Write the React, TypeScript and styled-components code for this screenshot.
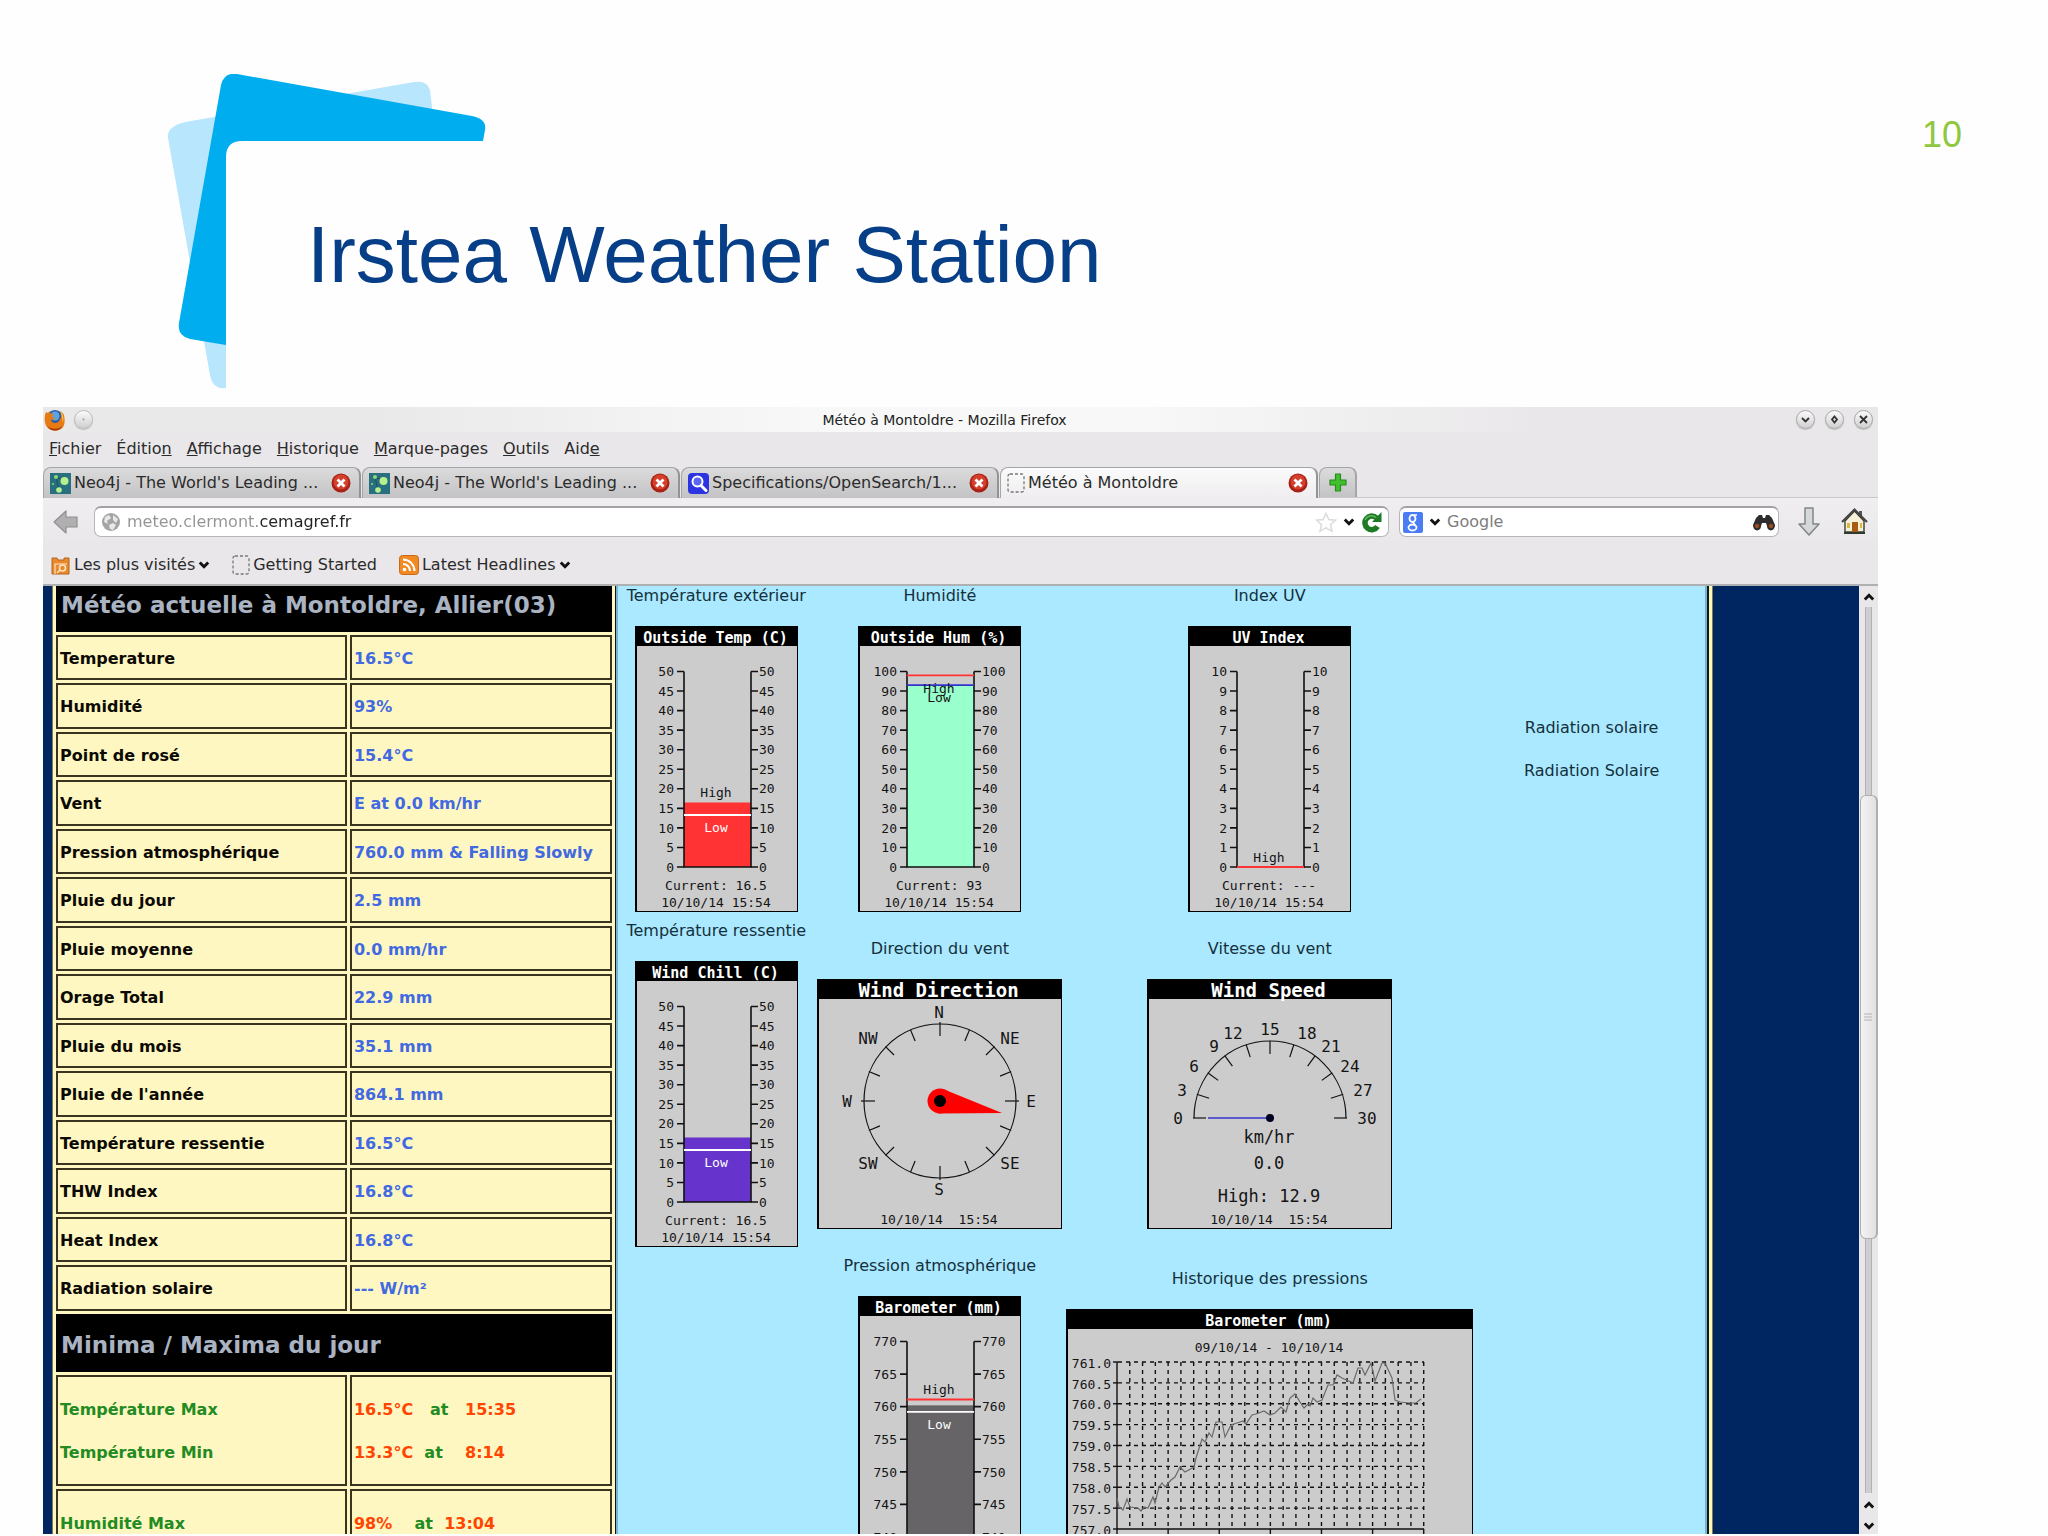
import React from "react";
import styled, { createGlobalStyle } from "styled-components";

const sans = `"DejaVu Sans", "Noto Sans", sans-serif`;
const mono = `"DejaVu Sans Mono", "Liberation Mono", monospace`;

const GlobalStyle = createGlobalStyle`
  * { box-sizing: border-box; }
  body { margin: 0; background: #fefefe; }
  button { font: inherit; color: inherit; background: none; border: 0; padding: 0; }
  svg { display: block; flex: none; }
`;

/* ---------- slide ---------- */

const Slide = styled.main`
  display: flex;
  flex-direction: column;
  height: 100vh;
  overflow: hidden;
  padding-bottom: 2px;
`;

const SlideHeader = styled.header`
  display: grid;
  grid-template-columns: 1fr auto;
  align-items: start;
  min-height: 407px;
  padding: 74px 86px 0 166px;
  font-family: "Liberation Sans", Arial, sans-serif;
`;

const Logo = styled.svg`
  grid-area: 1 / 1;
`;

const SlideTitle = styled.h1`
  grid-area: 1 / 1;
  margin: 135px 0 0 141px;
  font-size: 80px;
  line-height: 92px;
  font-weight: 400;
  color: #063e87;
`;

const SlideNumber = styled.span`
  margin-top: 41px;
  font-size: 36px;
  line-height: 40px;
  color: #8fc73e;
`;

/* ---------- browser window ---------- */

const Browser = styled.section`
  display: flex;
  flex-direction: column;
  flex: 1;
  min-height: 0;
  margin: 0 170px 0 43px;
  background: #e9e7e9;
  font-family: ${sans};
  font-size: 16px;
  line-height: 20px;
  color: #2b2b2b;
`;

const TitleBar = styled.div`
  display: flex;
  align-items: center;
  height: 25px;
  padding: 0 5px 0 1px;
  background: linear-gradient(90deg, #e9e9ea 18%, #f8f8f8 42%, #f8f8f8 60%, #e9e7e9 82%);
`;

const WindowTitle = styled.h2`
  flex: 1;
  margin: 0;
  text-align: center;
  font-size: 14px;
  font-weight: 400;
  color: #222;
`;

const ButtonGroup = styled.div<{ $gap: number }>`
  display: flex;
  align-items: center;
  gap: ${(p) => p.$gap}px;
`;

const RoundButton = styled.button<{ $faint?: boolean }>`
  display: grid;
  place-items: center;
  width: 19px;
  height: 19px;
  border-radius: 50%;
  border: 1px solid ${(p) => (p.$faint ? "#bcbcbc" : "#a9a9a9")};
  background: linear-gradient(#fbfbfb, #cfcfcf);
  box-shadow: 0 1px 1px #bbb;
`;

const MenuBar = styled.nav`
  display: flex;
  align-items: center;
  gap: 15px;
  height: 35px;
  padding: 0 6px 1px;
`;

const TabStrip = styled.div`
  display: flex;
  gap: 1px;
  height: 31px;
  border-bottom: 1px solid #c9c7c9;
`;

const Tab = styled.div<{ $active?: boolean }>`
  display: flex;
  align-items: center;
  gap: 3px;
  width: 318px;
  height: 31px;
  padding: 0 8px 0 6px;
  border: 1px solid #a5a4a6;
  border-right: 2px solid #939295;
  border-bottom: 0;
  border-radius: 8px 8px 0 0;
  background: ${(p) =>
    p.$active ? "linear-gradient(#fbfbfb, #efedef)" : "linear-gradient(#dcdbdc, #c3c2c4)"};
`;

const TabLabel = styled.button`
  flex: 1;
  min-width: 0;
  text-align: left;
  white-space: nowrap;
`;

const NewTab = styled.button`
  display: grid;
  place-items: center;
  width: 38px;
  height: 30px;
  border: 1px solid #a5a4a6;
  border-right-width: 2px;
  border-bottom: 0;
  border-radius: 8px 8px 0 0;
  background: linear-gradient(#dddcdd, #c3c2c4);
`;

const NavRow = styled.div`
  display: flex;
  align-items: center;
  height: 47px;
  padding: 0 10px;
  background: linear-gradient(#f0eef0, #e9e7e9);
`;

const Field = styled.label<{ $wide?: boolean }>`
  display: flex;
  align-items: center;
  flex: ${(p) => (p.$wide ? "1 1 0" : "0 0 380px")};
  height: 31px;
  padding: 0 ${(p) => (p.$wide ? 6 : 3)}px;
  margin-left: ${(p) => (p.$wide ? 14 : 10)}px;
  gap: 6px;
  background: #fff;
  border: 1px solid #b7b5b7;
  border-top: 2px solid #a3a1a3;
  border-radius: 7px;
`;

const TextInput = styled.input`
  flex: 1;
  min-width: 0;
  border: 0;
  outline: 0;
  padding: 0;
  background: none;
  font: inherit;
  color: #222;
  &::placeholder {
    color: #7d7d7d;
    opacity: 1;
  }
`;

const AddressInput = styled(TextInput)`
  background: linear-gradient(90deg, #939393 132px, #222 132px);
  -webkit-background-clip: text;
  background-clip: text;
  -webkit-text-fill-color: transparent;
`;

const ToolIcons = styled.div`
  display: flex;
  align-items: center;
  gap: 20px;
  margin-left: 18px;
`;

const Bookmarks = styled.div`
  display: flex;
  align-items: center;
  gap: 22px;
  height: 41px;
  padding: 0 8px;
  border-bottom: 2px solid #aeb0b2;
`;

const Bookmark = styled.button`
  display: flex;
  align-items: center;
  gap: 3px;
`;

/* ---------- page shown in the browser ---------- */

const Viewport = styled.div`
  display: flex;
  flex: 1;
  min-height: 0;
  overflow: hidden;
  background: #002661;
`;

const Scrolled = styled.div`
  display: flex;
  flex: 1;
  align-self: flex-start;
  margin: -15px 147px 0 10px;
  background: #fff7c2;
  border-right: 3px solid #fdf8b4;
  outline: 1px solid #7d7a58;
`;

const Readings = styled.table`
  flex: none;
  width: 562px;
  align-self: flex-start;
  table-layout: fixed;
  border-collapse: separate;
  border-spacing: 3px;
  font-weight: 700;
  text-align: left;
`;

const SectionTitle = styled.th`
  height: 58px;
  padding: 3px 5px 0;
  background: #000;
  color: #a9b3c2;
  font-size: 23px;
  line-height: 28px;
`;

const Row = styled.tr`
  height: 45px;
  &:nth-child(even) {
    height: 46px;
  }
  th,
  td {
    padding-top: 2px;
  }
`;

const Label = styled.th<{ $tone?: string }>`
  padding: 0 2px;
  border: 2px solid #39341f;
  color: ${(p) => p.$tone ?? "#0c0a04"};
`;

const Value = styled.td<{ $tone?: string }>`
  padding: 0 2px;
  border: 2px solid #39341f;
  color: ${(p) => p.$tone ?? "#4169e1"};
  white-space: pre;
`;

const Line = styled.div`
  line-height: 43px;
  &:first-child {
    padding-top: 11px;
  }
  &:last-child {
    padding-bottom: 10px;
  }
`;

const At = styled.span`
  color: #228b22;
`;

const Instruments = styled.div`
  display: grid;
  flex: 1;
  align-content: start;
  grid-template-columns: 200fr 246fr 412fr 230fr;
  row-gap: 9px;
  padding-top: 15px;
  background: #aae9ff;
  border: solid #10181c;
  border-width: 0 2px 0 1px;
  box-shadow: inset 2px 0 #78b4d6, inset -2px 0 #78b4d6;
`;

const Instrument = styled.figure<{ $gap?: number }>`
  display: flex;
  flex-direction: column;
  align-items: center;
  justify-content: center;
  gap: ${(p) => p.$gap ?? 20}px;
  margin: 0;
`;

const Caption = styled.figcaption`
  line-height: 20px;
  white-space: nowrap;
  color: #14303c;
`;

const Chart = styled.svg`
  font-family: ${mono};
`;

const ScrollBar = styled.div`
  display: flex;
  flex-direction: column;
  align-items: center;
  width: 19px;
  background: #e9e7e9;
`;

const Arrow = styled.button<{ $h: number }>`
  display: grid;
  place-items: center;
  width: 19px;
  height: ${(p) => p.$h}px;
`;

const Track = styled.div<{ $grow: number }>`
  flex: ${(p) => p.$grow} 1 0;
  width: 7px;
  background: #cfcdcf;
  border: solid #b3b1b3;
  border-width: 0 1px;
`;

const Thumb = styled.div`
  display: grid;
  place-items: center;
  flex: 443 1 0;
  width: 18px;
  border: 1px solid #b0aeb0;
  border-right-width: 2px;
  border-radius: 6px;
  background: linear-gradient(90deg, #f4f3f4, #e2e0e2);
`;

/* ---------- small drawings ---------- */

const Chevron = ({ up, size = 12 }: { up?: boolean; size?: number }) => (
  <svg width={size} height={size} viewBox="0 0 10 10">
    <path
      d={up ? "M1.5 7 5 3.5 8.500 7" : "M1.500 3 5 6.500 8.500 3"}
      fill="none"
      stroke="#111"
      strokeWidth="2.400"
    />
  </svg>
);

const FirefoxIcon = () => (
  <svg width="21" height="22" viewBox="0 0 21 22">
    <circle cx="11" cy="10" r="9" fill="#2a5ea8" />
    <circle cx="11" cy="7" r="4.500" fill="#5fa4dc" />
    <path
      d="M2 3C0 8 0 14 3 18c4 5 12 5 16 0 2-3 2-7 1-12-1-2-2-3-4-4 2 3 2 6 0 8-1 3-3 4-5 4-3 0-4-2-4-4 1 1 3 1 4-1-2 0-3-1-3-2l2-2C9 5 8 5 7 5 6 4 6 3 6 2L4 4z"
      fill="#e77a12"
    />
    <path d="M3 17c4 6 12 6 16 0-3 3-12 4-16 0z" fill="#a8380c" />
    <path d="M16 2c3 2 4 6 3 12-1-4-1-8-3-12z" fill="#f7c34a" />
  </svg>
);

const NeoIcon = () => (
  <svg width="21" height="21" viewBox="0 0 21 21">
    <rect width="21" height="21" fill="#28707f" />
    <path d="M6 4 15 8M6 4l3 14" stroke="#1c4f5c" strokeWidth="1" />
    <circle cx="14.500" cy="8" r="4" fill="#b6f08e" />
    <circle cx="6" cy="4" r="2" fill="#8fd87a" />
    <circle cx="9" cy="17" r="2.800" fill="#b6f08e" />
    <circle cx="3" cy="11" r="1" fill="#8fd87a" />
  </svg>
);

const SearchSiteIcon = () => (
  <svg width="21" height="21" viewBox="0 0 21 21">
    <rect width="21" height="21" rx="4" fill="#2b34e0" />
    <circle cx="9.500" cy="8.500" r="5" fill="#5a66f2" stroke="#fff" strokeWidth="2" />
    <path d="m13 12.500 5 5" stroke="#fff" strokeWidth="3" strokeLinecap="round" />
  </svg>
);

const BlankIcon = () => (
  <svg width="18" height="20" viewBox="0 0 18 20">
    <rect x="1" y="1" width="16" height="18" rx="2" fill="none" stroke="#77777a" strokeWidth="1.300" strokeDasharray="3 2" />
  </svg>
);

const CloseIcon = () => (
  <svg width="20" height="20" viewBox="0 0 20 20">
    <circle cx="10" cy="10" r="9.500" fill="#a92015" />
    <circle cx="10" cy="9" r="7.500" fill="#d4402c" />
    <path d="m6.500 6.500 7 7m0-7-7 7" stroke="#fff" strokeWidth="2.800" />
  </svg>
);

const PlusIcon = () => (
  <svg width="18" height="19" viewBox="0 0 18 19">
    <path d="M6.500 1h5v6H17v5h-5.500v6h-5v-6H1V7h5.500z" fill="#3fc02c" stroke="#2b8a20" strokeWidth="1.200" strokeLinejoin="round" />
  </svg>
);

const BackIcon = () => (
  <svg width="27" height="24" viewBox="0 0 27 24">
    <path d="M13 1v6h11v10H13v6L1 12z" fill="#b1b0b1" stroke="#8f8e90" strokeWidth="1.200" strokeLinejoin="round" />
  </svg>
);

const GlobeIcon = () => (
  <svg width="20" height="20" viewBox="0 0 20 20">
    <circle cx="10" cy="10" r="9" fill="#a4a4a4" />
    <path d="m4 5 4-2 2 3-4 3 1 3-4-2zM12 3l5 4-2 4-3-3zM8 13l4-2 3 2-3 5-3-1z" fill="#e8e8e8" />
  </svg>
);

const StarIcon = () => (
  <svg width="22" height="21" viewBox="0 0 22 21">
    <path d="m11 1.500 2.800 6 6.700.7-5 4.500 1.500 6.600-6-3.400-6 3.400 1.500-6.600-5-4.500 6.700-.7z" fill="#fdfdfd" stroke="#dcdadc" strokeWidth="1.500" />
  </svg>
);

const ReloadIcon = () => (
  <svg width="21" height="21" viewBox="0 0 21 21">
    <path d="M16.500 14.500A6.800 6.800 0 1 1 15.500 6" fill="none" stroke="#1d7a25" strokeWidth="5.500" />
    <path d="M20.500 0v10H11z" fill="#1d7a25" />
    <path d="M15 5.500a7 7 0 0 0-11 2.500" fill="none" stroke="#5fb75c" strokeWidth="1.500" />
  </svg>
);

const GoogleIcon = () => (
  <svg width="20" height="21" viewBox="0 0 20 21">
    <rect width="20" height="21" rx="2" fill="#4a7df3" />
    <ellipse cx="9.500" cy="6.500" rx="3" ry="3.500" fill="none" stroke="#fff" strokeWidth="1.800" />
    <ellipse cx="9.500" cy="15.500" rx="4" ry="3" fill="none" stroke="#fff" strokeWidth="1.800" />
    <path d="M11 3h3M10 10l2 3" stroke="#fff" strokeWidth="1.600" />
  </svg>
);

const BinocularsIcon = () => (
  <svg width="22" height="17" viewBox="0 0 22 17">
    <path d="M6 1h3l1 3h2l1-3h3l3 3 3 7c0 7-8 7-8 1l-1-3h-4l-1 3c0 6-8 6-8-1l3-7z" fill="#2e2c2c" />
    <circle cx="4" cy="12" r="2.200" fill="#9c4c1c" />
    <circle cx="18" cy="12" r="2.200" fill="#9c4c1c" />
  </svg>
);

const DownloadIcon = () => (
  <svg width="24" height="29" viewBox="0 0 24 29">
    <path d="M8 1h8v16h6L12 28 2 17h6z" fill="#d5d8da" stroke="#828587" strokeWidth="1.500" strokeLinejoin="round" />
  </svg>
);

const HomeIcon = () => (
  <svg width="27" height="27" viewBox="0 0 27 27">
    <path d="M18 3h3v7h-3z" fill="#555" />
    <path d="M4 13 13.500 3 23 13v11H4z" fill="#f6f0d8" stroke="#3c3c34" strokeWidth="1.400" />
    <path d="M1 14 13.500 1.500 26 14" fill="none" stroke="#444" strokeWidth="2" />
    <path d="M11 14h6v10h-6z" fill="#a85a14" />
    <path d="M6 15h3v5H6zM19 15h2v5h-2z" fill="#d9b84a" />
    <path d="M3 24h21v2H3z" fill="#2e3a2c" />
  </svg>
);

const FolderIcon = () => (
  <svg width="20" height="20" viewBox="0 0 20 20">
    <path d="M1 3h5l1 2h6V3h5v16H1z" fill="#e8892c" stroke="#b9651a" />
    <path d="M4 19V9h12" fill="none" stroke="#fbe3c4" strokeWidth="1.200" />
    <circle cx="11.500" cy="13" r="3" fill="none" stroke="#fbe3c4" strokeWidth="1.500" />
    <path d="m9 15-3 3" stroke="#fbe3c4" strokeWidth="1.500" />
  </svg>
);

const RssIcon = () => (
  <svg width="20" height="20" viewBox="0 0 20 20">
    <rect x=".5" y=".5" width="19" height="19" rx="3" fill="#f28a24" stroke="#c9691a" />
    <circle cx="5.500" cy="14.500" r="1.800" fill="#fff" />
    <path d="M4 9a7 7 0 0 1 7 7M4 4.500A11.500 11.500 0 0 1 15.500 16" fill="none" stroke="#fff" strokeWidth="2" />
  </svg>
);

/* ---------- instruments ---------- */

type TextProps = {
  x: number;
  y: number;
  size?: number;
  anchor?: "start" | "middle" | "end";
  fill?: string;
  bold?: boolean;
  children: React.ReactNode;
};

/* Text centred vertically on y. */
const T = ({ x, y, size = 13, anchor = "middle", fill = "#141414", bold, children }: TextProps) => (
  <text
    x={x}
    y={Math.round(y + size * 0.36)}
    fontSize={size}
    textAnchor={anchor}
    fill={fill}
    fontWeight={bold ? 700 : 400}
  >
    {children}
  </text>
);

const Panel = ({ w, h, title, size = 15 }: { w: number; h: number; title: string; size?: number }) => (
  <>
    <rect width={w} height={h} fill="#000" />
    <rect x="2" y="20" width={w - 3} height={h - 21} fill="#cdcccd" />
    <T x={w / 2 - 1} y={size > 15 ? 11 : 12} size={size} fill="#fff" bold>
      {title}
    </T>
  </>
);

type Mark = { at: number; color: string };
type Note = { y: number; text: string; color?: string };

type GaugeProps = {
  title: string;
  min: number;
  max: number;
  step: number;
  value?: number;
  color?: string;
  marks?: Mark[];
  notes?: Note[];
  current: string;
};

const TOP = 45.5;
const BOTTOM = 241;

const Gauge = ({ title, min, max, step, value, color, marks = [], notes = [], current }: GaugeProps) => {
  const y = (v: number) => BOTTOM - ((v - min) / (max - min)) * (BOTTOM - TOP);
  const ticks = Array.from({ length: (max - min) / step + 1 }, (_, i) => min + i * step);
  return (
    <Chart width="163" height="286" viewBox="0 0 163 286" role="img" aria-label={title}>
      <Panel w={163} h={286} title={title} />
      {value !== undefined && <rect x="49" y={y(value)} width="67" height={BOTTOM - y(value)} fill={color} />}
      <path d={`M49 ${TOP}V${BOTTOM}H116V${TOP}`} fill="none" stroke="#111" strokeWidth="1.600" />
      {ticks.map((t) => (
        <g key={t}>
          <path d={`M42 ${y(t)}h7m67 0h7`} stroke="#111" strokeWidth="1.600" />
          <T x={39} y={y(t)} anchor="end">{t}</T>
          <T x={124} y={y(t)} anchor="start">{t}</T>
        </g>
      ))}
      {marks.map((m) => (
        <path key={m.color} d={`M49 ${y(m.at)}h67`} stroke={m.color} strokeWidth="1.800" />
      ))}
      {notes.map((n) => (
        <T key={n.text} x={81} y={n.y} fill={n.color}>{n.text}</T>
      ))}
      <T x={81} y={259}>Current: {current}</T>
      <T x={81} y={276}>10/10/14 15:54</T>
    </Chart>
  );
};

const ray = (cx: number, cy: number, deg: number, r1: number, r2: number) => {
  const a = (deg * Math.PI) / 180;
  return `M${cx + r1 * Math.sin(a)} ${cy - r1 * Math.cos(a)}L${cx + r2 * Math.sin(a)} ${cy - r2 * Math.cos(a)}`;
};

const compass: [string, number, number][] = [
  ["N", 122, 33], ["NE", 193, 59], ["E", 214, 122], ["SE", 193, 184],
  ["S", 122, 210], ["SW", 51, 184], ["W", 30, 122], ["NW", 51, 59],
];

const WindDirection = () => (
  <Chart width="245" height="250" viewBox="0 0 245 250" role="img" aria-label="Wind Direction">
    <Panel w={245} h={250} title="Wind Direction" size={19} />
    <ellipse cx="123" cy="122" rx="76" ry="77" fill="none" stroke="#111" strokeWidth="1.200" />
    {Array.from({ length: 16 }, (_, i) => (
      <path key={i} d={ray(123, 122, i * 22.5, 65, i % 4 ? 77 : 79)} stroke="#111" strokeWidth="1.200" />
    ))}
    {compass.map(([t, x, y]) => (
      <T key={t} x={x} y={y} size={16}>{t}</T>
    ))}
    <path d="M126 110 185 134 121 134.500z" fill="#f00" />
    <circle cx="123" cy="122" r="12.500" fill="#f00" />
    <circle cx="123" cy="122" r="6" fill="#000" />
    <T x={122} y={240}>{"10/10/14\u00a0 15:54"}</T>
  </Chart>
);

const speeds: [number, number, number][] = [
  [0, 31, 139], [3, 35, 111], [6, 47, 87], [9, 67, 67], [12, 86, 54], [15, 123, 50],
  [18, 160, 54], [21, 184, 67], [24, 203, 87], [27, 216, 111], [30, 220, 139],
];

const WindSpeed = () => (
  <Chart width="245" height="250" viewBox="0 0 245 250" role="img" aria-label="Wind Speed">
    <Panel w={245} h={250} title="Wind Speed" size={19} />
    <path d="M47 139A76 77 0 0 1 199 139" fill="none" stroke="#111" strokeWidth="1.200" />
    {speeds.map(([t, x, y], i) => (
      <g key={t}>
        <path d={ray(123, 139, -90 + i * 18, 64, 77)} stroke="#111" strokeWidth="1.200" />
        <T x={x} y={y} size={16}>{t}</T>
      </g>
    ))}
    <path d="M61 139h62" stroke="#33c" strokeWidth="1.600" />
    <circle cx="123" cy="139" r="4" fill="#000020" />
    <T x={122} y={158} size={17}>km/hr</T>
    <T x={122} y={184} size={17}>0.0</T>
    <T x={122} y={217} size={17}>High: 12.9</T>
    <T x={122} y={240}>{"10/10/14\u00a0 15:54"}</T>
  </Chart>
);

const pressureCurve =
  "51,189 53,198 57,201 61,190 64,198 72,199 75,202 78,198 82,199 87,188 89,194 93,178 96,174 99,178 105,171 109,168 114,158 119,163 128,158 130,149 136,130 139,133 143,124 146,128 150,113 156,113 159,128 165,116 174,113 177,112 180,115 186,106 190,105 198,102 204,106 209,104 215,98 220,103 224,89 229,85 234,93 238,99 242,95 244,97 247,89 251,93 256,91 262,76 267,76 271,66 276,69 287,74 292,59 296,59 299,66 305,54 309,72 316,54 319,54 326,69 329,91 334,93 343,94 350,94 355,90";

const PressureHistory = () => {
  const rows = Array.from({ length: 9 }, (_, i) => 53 + i * 20.875);
  const cols = Array.from({ length: 24 }, (_, i) => 51 + (i + 1) * 12.78);
  return (
    <Chart width="407" height="260" viewBox="0 0 407 260" role="img" aria-label="Barometer (mm)">
      <Panel w={407} h={260} title="Barometer (mm)" />
      <T x={203} y={38}>09/10/14 - 10/10/14</T>
      {rows.map((y, i) => (
        <g key={y}>
          <T x={45} y={y + 1} anchor="end">{(761 - i * 0.5).toFixed(1)}</T>
          <path d={`M47 ${y}h5`} stroke="#111" strokeWidth="1.400" />
          {i < 8 && <path d={`M52 ${y}H358`} stroke="#111" strokeWidth="1.400" strokeDasharray="4 4" />}
        </g>
      ))}
      {cols.map((x, i) => (
        <g key={x}>
          <path d={`M${x} 53V220`} stroke="#111" strokeWidth="1.400" strokeDasharray="4 4" />
          {i % 4 === 3 && <path d={`M${x} 220v8`} stroke="#111" strokeWidth="1.400" />}
        </g>
      ))}
      <path d="M51 53V228M51 220H358" fill="none" stroke="#111" strokeWidth="1.400" />
      <polyline points={pressureCurve} fill="none" stroke="#6a6a6a" strokeWidth="1.200" />
    </Chart>
  );
};

/* ---------- data ---------- */

const menus: [string, string, string][] = [
  ["", "F", "ichier"], ["Éditio", "n", ""], ["", "A", "ffichage"], ["", "H", "istorique"],
  ["", "M", "arque-pages"], ["", "O", "utils"], ["Aid", "e", ""],
];

const tabs = [
  { icon: <NeoIcon />, label: "Neo4j - The World's Leading ..." },
  { icon: <NeoIcon />, label: "Neo4j - The World's Leading ..." },
  { icon: <SearchSiteIcon />, label: "Specifications/OpenSearch/1..." },
  { icon: <BlankIcon />, label: "Météo à Montoldre", active: true },
];

const readings = [
  ["Temperature", "16.5°C"],
  ["Humidité", "93%"],
  ["Point de rosé", "15.4°C"],
  ["Vent", "E at 0.0 km/hr"],
  ["Pression atmosphérique", "760.0 mm & Falling Slowly"],
  ["Pluie du jour", "2.5 mm"],
  ["Pluie moyenne", "0.0 mm/hr"],
  ["Orage Total", "22.9 mm"],
  ["Pluie du mois", "35.1 mm"],
  ["Pluie de l'année", "864.1 mm"],
  ["Température ressentie", "16.5°C"],
  ["THW Index", "16.8°C"],
  ["Heat Index", "16.8°C"],
  ["Radiation solaire", "--- W/m²"],
];

const extremes = [
  [
    { label: "Température Max", value: "16.5°C   ", time: "   15:35" },
    { label: "Température Min", value: "13.3°C  ", time: "    8:14" },
  ],
  [{ label: "Humidité Max", value: "98%    ", time: "  13:04" }],
];

export default function App() {
  return (
    <Slide>
      <GlobalStyle />
      <SlideHeader>
        <Logo width="320" height="316" viewBox="166 74 320 316" aria-hidden="true">
          <path
            d="M191 121 414 82Q427 80 430 90L436 141H226V388Q213 390 210 375L168 138Q166 125 191 121Z"
            fill="#b8e6fd"
          />
          <path
            d="M237 74 472 116Q487 119 485 130L483 141H242Q226 141 226 157V345L190 339Q177 336 179 323L221 85Q224 72 237 74Z"
            fill="#00aeef"
          />
        </Logo>
        <SlideTitle>Irstea Weather Station</SlideTitle>
        <SlideNumber>10</SlideNumber>
      </SlideHeader>

      <Browser>
        <TitleBar>
          <ButtonGroup $gap={9}>
            <FirefoxIcon />
            <RoundButton $faint aria-label="Épingler">
              <svg width="9" height="9"><circle cx="4.500" cy="4.500" r="1" fill="#999" /></svg>
            </RoundButton>
          </ButtonGroup>
          <WindowTitle>Météo à Montoldre - Mozilla Firefox</WindowTitle>
          <ButtonGroup $gap={10}>
            <RoundButton aria-label="Réduire">
              <svg width="9" height="9"><path d="m1 3 3.500 3.500L8 3" fill="none" stroke="#333" strokeWidth="1.800" /></svg>
            </RoundButton>
            <RoundButton aria-label="Agrandir">
              <svg width="9" height="9"><path d="m4.500 1.500 2.500 3-2.500 3-2.500-3z" fill="none" stroke="#333" strokeWidth="1.800" /></svg>
            </RoundButton>
            <RoundButton aria-label="Fermer">
              <svg width="9" height="9"><path d="m1 1 7 7m0-7L1 8" stroke="#333" strokeWidth="1.800" /></svg>
            </RoundButton>
          </ButtonGroup>
        </TitleBar>

        <MenuBar>
          {menus.map(([a, key, b]) => (
            <button key={a + key + b}>{a}<u>{key}</u>{b}</button>
          ))}
        </MenuBar>

        <TabStrip>
          {tabs.map((t, i) => (
            <Tab key={i} $active={t.active}>
              {t.icon}
              <TabLabel>{t.label}</TabLabel>
              <button aria-label="Fermer l'onglet"><CloseIcon /></button>
            </Tab>
          ))}
          <NewTab aria-label="Nouvel onglet"><PlusIcon /></NewTab>
        </TabStrip>

        <NavRow>
          <button aria-label="Précédent"><BackIcon /></button>
          <Field $wide>
            <GlobeIcon />
            <AddressInput aria-label="Adresse" defaultValue="meteo.clermont.cemagref.fr" />
            <StarIcon />
            <Chevron />
            <ReloadIcon />
          </Field>
          <Field>
            <GoogleIcon />
            <Chevron />
            <TextInput aria-label="Recherche" placeholder="Google" />
            <BinocularsIcon />
          </Field>
          <ToolIcons>
            <button aria-label="Téléchargements"><DownloadIcon /></button>
            <button aria-label="Accueil"><HomeIcon /></button>
          </ToolIcons>
        </NavRow>

        <Bookmarks>
          <Bookmark><FolderIcon />Les plus visités<Chevron /></Bookmark>
          <Bookmark><BlankIcon />Getting Started</Bookmark>
          <Bookmark><RssIcon />Latest Headlines<Chevron /></Bookmark>
        </Bookmarks>

        <Viewport>
          <Scrolled>
            <Readings>
              <colgroup>
                <col />
                <col width="262" />
              </colgroup>
              <tbody>
                <tr><SectionTitle colSpan={2}>Météo actuelle à Montoldre, Allier(03)</SectionTitle></tr>
              </tbody>
              <tbody>
                {readings.map(([label, value]) => (
                  <Row key={label}>
                    <Label scope="row">{label}</Label>
                    <Value>{value}</Value>
                  </Row>
                ))}
              </tbody>
              <tbody>
                <tr><SectionTitle colSpan={2}>Minima / Maxima du jour</SectionTitle></tr>
                {extremes.map((group) => (
                  <tr key={group[0].label}>
                    <Label scope="row" $tone="#228b22">
                      {group.map((g) => <Line key={g.label}>{g.label}</Line>)}
                    </Label>
                    <Value $tone="#ff4500">
                      {group.map((g) => (
                        <Line key={g.label}>{g.value}<At>at</At>{g.time}</Line>
                      ))}
                    </Value>
                  </tr>
                ))}
              </tbody>
            </Readings>

            <Instruments>
              <Instrument>
                <Caption>Température extérieur</Caption>
                <Gauge
                  title="Outside Temp (C)" min={0} max={50} step={5} value={16.5} color="#ff3333"
                  marks={[{ at: 13.3, color: "#fff" }]}
                  notes={[{ y: 166, text: "High" }, { y: 201, text: "Low", color: "#fff" }]}
                  current="16.5"
                />
              </Instrument>
              <Instrument>
                <Caption>Humidité</Caption>
                <Gauge
                  title="Outside Hum (%)" min={0} max={100} step={10} value={93} color="#99ffcc"
                  marks={[{ at: 98, color: "#f33" }, { at: 93, color: "#33c" }]}
                  notes={[{ y: 62, text: "High" }, { y: 71, text: "Low" }]}
                  current="93"
                />
              </Instrument>
              <Instrument>
                <Caption>Index UV</Caption>
                <Gauge
                  title="UV Index" min={0} max={10} step={1}
                  marks={[{ at: 0, color: "#f33" }]}
                  notes={[{ y: 231, text: "High" }]}
                  current="---"
                />
              </Instrument>
              <Instrument $gap={23}>
                <Caption>Radiation solaire</Caption>
                <Caption as="span">Radiation Solaire</Caption>
              </Instrument>

              <Instrument>
                <Caption>Température ressentie</Caption>
                <Gauge
                  title="Wind Chill (C)" min={0} max={50} step={5} value={16.5} color="#6633cc"
                  marks={[{ at: 13.3, color: "#fff" }]}
                  notes={[{ y: 201, text: "Low", color: "#fff" }]}
                  current="16.5"
                />
              </Instrument>
              <Instrument>
                <Caption>Direction du vent</Caption>
                <WindDirection />
              </Instrument>
              <Instrument>
                <Caption>Vitesse du vent</Caption>
                <WindSpeed />
              </Instrument>
              <span />

              <span />
              <Instrument>
                <Caption>Pression atmosphérique</Caption>
                <Gauge
                  title="Barometer (mm)" min={740} max={770} step={5} value={760.2} color="#666466"
                  marks={[{ at: 761.1, color: "#f33" }, { at: 759.2, color: "#fff" }]}
                  notes={[{ y: 93, text: "High" }, { y: 128, text: "Low", color: "#fff" }]}
                  current="760.0"
                />
              </Instrument>
              <Instrument>
                <Caption>Historique des pressions</Caption>
                <PressureHistory />
              </Instrument>
            </Instruments>
          </Scrolled>

          <ScrollBar>
            <Arrow $h={21} aria-label="Défiler vers le haut"><Chevron up /></Arrow>
            <Track $grow={188} />
            <Thumb>
              <svg width="8" height="8"><path d="M0 1h8M0 4h8M0 7h8" stroke="#b4b2b4" /></svg>
            </Thumb>
            <Track $grow={255} />
            <Arrow $h={24} aria-label="Défiler vers le haut"><Chevron up /></Arrow>
            <Arrow $h={17} aria-label="Défiler vers le bas"><Chevron /></Arrow>
          </ScrollBar>
        </Viewport>
      </Browser>
    </Slide>
  );
}
